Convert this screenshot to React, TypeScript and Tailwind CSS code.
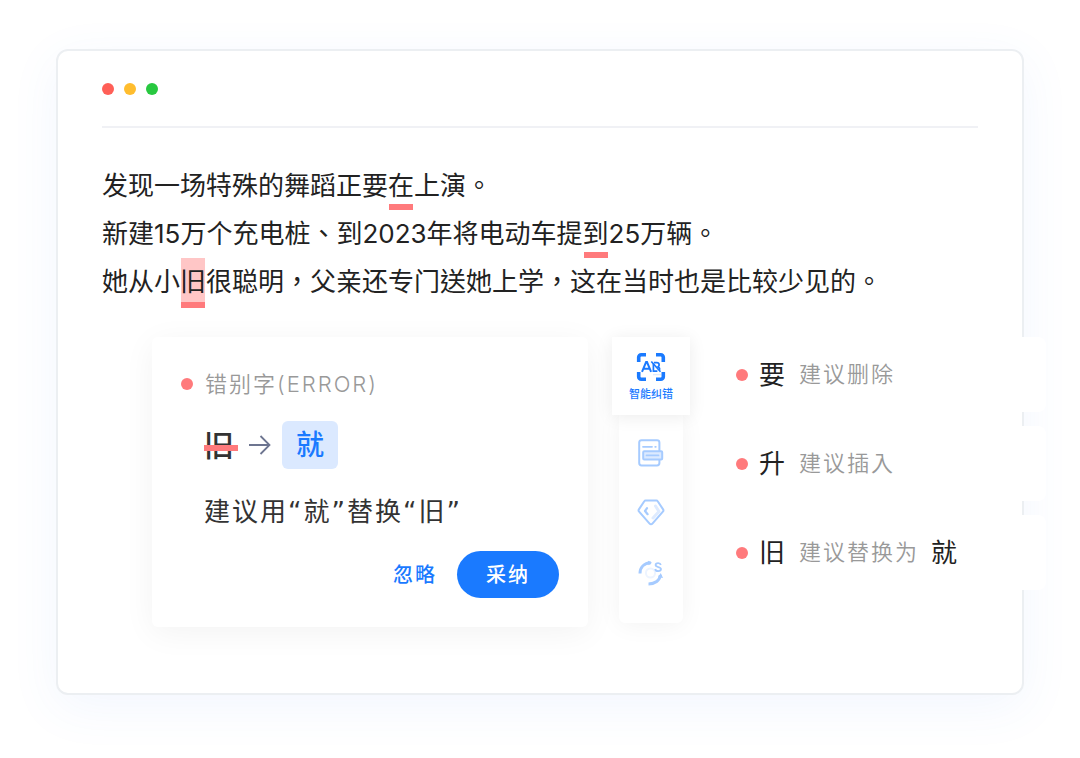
import React from 'react';
import { clsx } from 'clsx';

type MarkProps = { children: React.ReactNode; active?: boolean };

function Mark({ children, active }: MarkProps) {
  return (
    <mark className="relative inline-block h-12 bg-transparent text-inherit">
      {active && <span className="absolute inset-x-px top-0 -bottom-0.5 bg-[#ffc6c6]" />}
      <span className={clsx('absolute inset-x-px h-1.5 bg-[#ff7a7c]', active ? '-bottom-0.5' : 'bottom-0')} />
      <span className="relative">{children}</span>
    </mark>
  );
}

function Dot({ className }: { className: string }) {
  return <span className={clsx('size-3 shrink-0 rounded-full', className)} />;
}

function Quoted({ children }: { children: React.ReactNode }) {
  return (
    <>
      <span className="font-['DejaVu_Sans',sans-serif]">“</span>
      {children}
      <span className="font-['DejaVu_Sans',sans-serif]">”</span>
    </>
  );
}

function CheckIcon() {
  return (
    <svg width="30" height="30" viewBox="0 0 30 30" fill="none" stroke="#1a7aff">
      <path
        d="M2.7 10V5.2a2.5 2.5 0 0 1 2.5-2.5H10M20 2.700h4.800a2.500 2.500 0 0 1 2.500 2.500V10M27.300 20v4.800a2.500 2.500 0 0 1-2.500 2.500H20M10 27.300H5.200a2.500 2.500 0 0 1-2.500-2.500V20"
        strokeWidth="3.600"
      />
      <path d="m6 19.800 4.100-9.800h.9l4.100 9.800M7.600 16.700h6" strokeWidth="2" />
      <path d="M17.400 12v7.200h4M18 10.700h2.800c3 0 3 3.600.6 4.100 2.500.4 2.700 2.600 1.600 3.600" strokeWidth="1.700" />
      <path d="m15.300 9.500 9.200 10.200" strokeWidth="1.700" />
      <path d="M17 22.600h8" strokeWidth="1.400" opacity=".15" />
    </svg>
  );
}

function DocIcon() {
  return (
    <svg width="28" height="28" viewBox="0 0 28 28" fill="none" stroke="#a6cbff" strokeLinecap="round">
      <rect x="2.200" y="1.200" width="20.200" height="25.200" rx="2.400" strokeWidth="2" />
      <path d="M6 7.800h9M18.200 7.800h.6" strokeWidth="1.800" />
      <rect x="6.200" y="12.200" width="19" height="8.400" rx="1" fill="#dceaff" strokeWidth="2" />
      <path d="M9.500 16.400h12" strokeWidth="1.800" />
    </svg>
  );
}

function GemIcon() {
  return (
    <svg width="28" height="28" viewBox="0 0 28 28" fill="none" stroke="#a6cbff" strokeLinecap="round" strokeLinejoin="round">
      <path d="m18.500 7 3.500 5.500-6 6.500" stroke="#deebff" strokeWidth="3" />
      <path
        d="M8.600 1.500h10.800c.6 0 1 .2 1.300.7l5.400 8.200c.5.8.4 1.600-.2 2.200L15.400 24.600c-.8.9-2 .9-2.800 0L2.100 12.600c-.6-.6-.7-1.400-.2-2.200l5.400-8.200c.3-.5.7-.7 1.300-.7Z"
        strokeWidth="2"
      />
      <path d="M10 9.200 8 12l2.600 3.200" strokeWidth="2.200" />
    </svg>
  );
}

function SyncIcon() {
  return (
    <svg width="28" height="28" viewBox="0 0 28 28" fill="none">
      <circle cx="13.500" cy="14" r="4.600" stroke="#edf4ff" strokeWidth="2" />
      <path d="M3 14.500C3 8.500 7 4.200 13.800 3.800" stroke="#a6cbff" strokeWidth="3" />
      <path d="M11.500 25C18 25 23 21.500 23.300 16" stroke="#a6cbff" strokeWidth="3" />
      <path d="m11 1.800 4 2-3.500 2.500ZM21 18.300l2.800-4.300 2.200 5Z" fill="#a6cbff" />
      <path
        d="M23.800 6c-.3-1.300-1.300-1.800-2.600-1.800-1.500 0-2.600.7-2.600 1.900 0 2.600 5.400 1.200 5.400 4 0 1.300-1.200 2-2.800 2-1.700 0-2.800-.7-3-2.100"
        stroke="#a6cbff"
        strokeWidth="1.800"
      />
    </svg>
  );
}

function ArrowIcon() {
  return (
    <svg width="22" height="22" viewBox="0 0 22 22" fill="none" stroke="#6d7590" strokeWidth="1.800">
      <path d="M0 11h20M11.500 2l9 9-9 9" />
    </svg>
  );
}

const tools = [
  { label: '文档', icon: DocIcon },
  { label: '润色', icon: GemIcon },
  { label: '同步', icon: SyncIcon },
];

const suggestions = [
  { word: '要', hint: '建议删除' },
  { word: '升', hint: '建议插入' },
  { word: '旧', hint: '建议替换为', target: '就' },
];

export default function App() {
  return (
    <div className="overflow-hidden bg-white px-14 pt-[49px] pb-16 font-['Inter','Noto_Sans_CJK_TC',sans-serif] text-[#222]">
      <main className="rounded-xl border-2 border-[#eceff2] bg-white px-11 pt-8 pb-[66px] shadow-[0_12px_50px_rgba(70,130,240,0.07)]">
        <div className="flex gap-2.5 border-b-2 border-[#f0f1f5] pb-[31px]">
          <Dot className="bg-[#ff5f57]" />
          <Dot className="bg-[#ffbd2e]" />
          <Dot className="bg-[#28c840]" />
        </div>

        <div className="mt-[34px] text-[26px] leading-[48px]">
          <p>发现一场特殊的舞蹈正要<Mark>在</Mark>上演。</p>
          <p>新建15万个充电桩、到2023年将电动车提<Mark>到</Mark>25万辆。</p>
          <p>她从小<Mark active>旧</Mark>很聪明，父亲还专门送她上学，这在当时也是比较少见的。</p>
        </div>

        <div className="mt-[31px] -mr-[68px] ml-[50px] flex items-start">
          {/* Correction card */}
          <section className="w-[436px] shrink-0 rounded-md bg-white px-[29px] pt-[31px] pb-[29px] shadow-[0_6px_32px_rgba(0,0,0,0.05)]">
            <div className="flex items-center gap-3">
              <Dot className="bg-[#ff7a7c]" />
              <h2 className="text-[22px] leading-8 font-[350] tracking-[2px] text-[#999]">错别字(ERROR)</h2>
            </div>
            <div className="mt-[21px] flex items-center pl-[23px]">
              <del className="relative w-[34px] text-[30px] leading-[48px] font-medium text-[#333] no-underline">
                旧
                <span className="absolute inset-x-0 top-6 h-1.5 bg-[#ff7a7c]" />
              </del>
              <span className="mx-[11px]">
                <ArrowIcon />
              </span>
              <ins className="rounded-md bg-[#dbe9ff] px-3.5 text-[28px] leading-[48px] font-medium text-[#1a7aff] no-underline">就</ins>
            </div>
            <p className="mt-[25px] pl-[23px] text-[26px] leading-9 tracking-[2px] text-[#333]">
              建议用<Quoted>就</Quoted>替换<Quoted>旧</Quoted>
            </p>
            <div className="mt-[21px] flex items-center justify-end gap-5 text-[20px] font-medium tracking-[2px]">
              <button className="text-[#1a7aff]">忽略</button>
              <button className="h-[47px] rounded-full bg-[#1a7aff] px-[29px] text-white">采纳</button>
            </div>
          </section>

          {/* Tool rail */}
          <nav className="ml-6 flex w-[78px] shrink-0 flex-col items-center">
            <button className="relative flex h-[78px] w-full flex-col items-center bg-white pt-[15px] text-[11px] leading-4 font-medium text-[#1a7aff] shadow-[0_2px_16px_rgba(0,0,0,0.08)]">
              <CheckIcon />
              <span className="mt-1">智能纠错</span>
            </button>
            <div className="flex flex-col gap-8 rounded-b-md bg-white px-[18px] pt-6 pb-9 shadow-[0_2px_24px_rgba(0,0,0,0.05)]">
              {tools.map((tool) => (
                <button key={tool.label} aria-label={tool.label}>
                  <tool.icon />
                </button>
              ))}
            </div>
          </nav>

          {/* Suggestions, hanging over the right edge of the window */}
          <ul className="ml-[17px] flex min-w-0 flex-1 flex-col gap-3.5">
            {suggestions.map((s) => (
              <li key={s.word} className="flex h-[75px] items-center rounded-lg bg-white pl-[29px] text-[26px] text-[#222]">
                <Dot className="bg-[#ff7a7c]" />
                <span className="ml-[11px]">{s.word}</span>
                <span className="ml-3.5 text-[22px] font-[350] tracking-[2px] text-[#999]">{s.hint}</span>
                {s.target && <span className="ml-3">{s.target}</span>}
              </li>
            ))}
          </ul>
        </div>
      </main>
    </div>
  );
}
